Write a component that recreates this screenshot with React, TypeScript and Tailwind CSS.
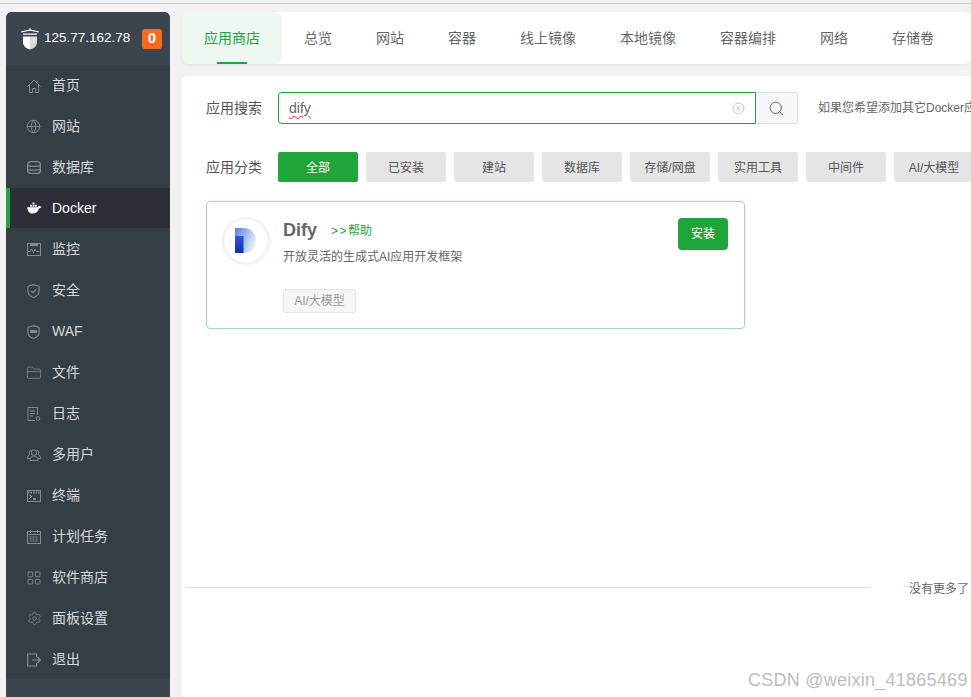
import React from 'react';
import { Globe, FolderClosed, LayoutGrid, Settings, Search, CircleX } from 'lucide-react';

const FONT = "font-['Liberation_Sans','Noto_Sans_CJK_SC',sans-serif]";

const tabs = ['应用商店', '总览', '网站', '容器', '线上镜像', '本地镜像', '容器编排', '网络', '存储卷'];
const categories = ['全部', '已安装', '建站', '数据库', '存储/网盘', '实用工具', '中间件', 'AI/大模型'];

function HomeIcon() {
  return (
    <svg width="14" height="14" viewBox="0 0 14 14" fill="none" stroke="currentColor">
      <path d="M0.500 7.500L7 1l6.500 6.500" />
      <path d="M2.500 6v7.500h3V9.500h3v4h3V6" />
      <path d="M10 1.500v2.500" />
    </svg>
  );
}

function DatabaseIcon() {
  return (
    <svg width="14" height="13" viewBox="0 0 14 13" fill="none" stroke="currentColor" strokeWidth="1.200">
      <rect x="0.600" y="0.600" width="12.800" height="11.800" rx="3" />
      <path d="M0.600 4.500c2 1.200 10.800 1.200 12.800 0M0.600 8.300c2 1.200 10.800 1.200 12.800 0" />
    </svg>
  );
}

function DockerIcon() {
  return (
    <svg width="15" height="12" viewBox="0 0 15 12" fill="#ffffff">
      <path d="M0.300 5.200h10.500c.2-.9.900-1.400 1.500-1.500.1.500.5.800 1.100.900.500.1.900.100 1.300 0-.5 1.200-1.500 1.800-2.800 1.900C11.200 9.800 8.800 11.600 5.600 11.600 2.200 11.600.4 8.900.3 5.200z" />
      <rect x="3" y="2.800" width="2" height="1.800" />
      <rect x="5.500" y="2.800" width="2" height="1.800" />
      <rect x="5.500" y="0.500" width="2" height="1.800" />
      <rect x="8" y="2.800" width="2" height="1.800" />
    </svg>
  );
}

function MonitorIcon() {
  return (
    <svg width="14" height="13" viewBox="0 0 14 13" fill="none" stroke="currentColor">
      <rect x="0.500" y="0.500" width="13" height="12" />
      <rect x="3" y="1" width="8" height="2" fill="currentColor" stroke="none" />
      <path d="M1 8.500h2l1.500-2.500 2 3.500 1.500-3 1.500 2h3" />
    </svg>
  );
}

function ShieldIcon({ waf }: { waf?: boolean }) {
  return (
    <svg width="13" height="14" viewBox="0 0 13 14" fill="none" stroke="currentColor" strokeWidth="1.100">
      <path d="M6.500 0.600l5.600 1.700v5.200c0 2.800-2.600 4.900-5.600 5.900C3.500 12.400.9 10.300.9 7.500V2.300z" />
      {waf ? <rect x="3" y="5" width="7" height="3" fill="currentColor" stroke="none" /> : <path d="M4 6.800l2 1.900 3.200-3.200" />}
    </svg>
  );
}

function LogIcon() {
  return (
    <svg width="14" height="14" viewBox="0 0 14 14" fill="none" stroke="currentColor">
      <path d="M10.500 8V.5h-9.500v13h7" />
      <path d="M3 4h5M3 6.500h5M3 9h3" />
      <circle cx="11" cy="11.500" r="1.800" />
    </svg>
  );
}

function UsersIcon() {
  return (
    <svg width="14" height="12" viewBox="0 0 14 12" fill="none" stroke="currentColor">
      <circle cx="7" cy="3.500" r="2.800" />
      <path d="M3 11.500c0-2.800 1.500-4.500 4-4.500s4 1.700 4 4.500z" />
      <path d="M4.500 1.500C2.800 1.200 1.800 2.500 2.200 4c.1.600.4 1 .8 1.300C1.300 6 .5 7.500.5 9.500H3M9.500 1.500c1.700-.3 2.700 1 2.300 2.500-.1.600-.4 1-.8 1.300 1.700.7 2.500 2.200 2.500 4.200H11" />
    </svg>
  );
}

function TerminalIcon() {
  return (
    <svg width="14" height="12" viewBox="0 0 14 12" fill="none" stroke="currentColor">
      <rect x="0.500" y="0.500" width="13" height="11" />
      <path d="M1 2.500h12" strokeDasharray="1.500 1" strokeWidth="2" />
      <path d="M2.500 5l2 1.700-2 1.700M6 9h3" stroke="#d5d8dc" />
    </svg>
  );
}

function CalendarIcon() {
  return (
    <svg width="14" height="14" viewBox="0 0 14 14" fill="none" stroke="currentColor">
      <rect x="0.500" y="1.500" width="13" height="12" />
      <path d="M3.500 0v3M10.500 0v3M0.500 4.500h13" />
      <path d="M2.500 7h9M2.500 9h9M2.500 11h9" strokeDasharray="2 1" />
    </svg>
  );
}

function ExitIcon() {
  return (
    <svg width="14" height="14" viewBox="0 0 14 14" fill="none" stroke="currentColor" strokeWidth="1.200">
      <path d="M9.500 4V1H.7v12h8.800v-3" />
      <path d="M5 7h8.300M10.500 4l3 3-3 3" />
    </svg>
  );
}

const menu: { label: string; icon: React.ReactNode; active?: boolean }[] = [
  { label: '首页', icon: <HomeIcon /> },
  { label: '网站', icon: <Globe size={15} strokeWidth={1.500} className="-ml-px" /> },
  { label: '数据库', icon: <DatabaseIcon /> },
  { label: 'Docker', icon: <DockerIcon />, active: true },
  { label: '监控', icon: <MonitorIcon /> },
  { label: '安全', icon: <ShieldIcon /> },
  { label: 'WAF', icon: <ShieldIcon waf /> },
  { label: '文件', icon: <FolderClosed size={16} strokeWidth={1.200} className="-ml-px" /> },
  { label: '日志', icon: <LogIcon /> },
  { label: '多用户', icon: <UsersIcon /> },
  { label: '终端', icon: <TerminalIcon /> },
  { label: '计划任务', icon: <CalendarIcon /> },
  { label: '软件商店', icon: <LayoutGrid size={16} strokeWidth={1.300} className="-ml-px" /> },
  { label: '面板设置', icon: <Settings size={15} strokeWidth={1.200} /> },
  { label: '退出', icon: <ExitIcon /> },
];

function Sidebar() {
  return (
    <aside className="flex w-[164px] shrink-0 flex-col overflow-hidden rounded-t-[6px] bg-[#363e45]">
      <div className="flex h-[53px] items-center bg-[#3c444d] pl-[14px] pr-[8px]">
        <svg width="20" height="22" viewBox="0 0 20 22" className="shrink-0">
          <path d="M9.500 0h1v1.500L19 3.500v1l-9-1.700L1 4.500v-1l8.500-2z" fill="#ffffff" />
          <path d="M3 5.500h14v1.200H3z" fill="#ffffff" />
          <path d="M3 8.500h7V21.500C6 20.500 3 18 3 14z" fill="#ffffff" />
          <path d="M10 8.500h7V14c0 4-3 6.500-7 7.500z" fill="#d9dcdf" />
        </svg>
        <span className="ml-[4px] text-[13.500px] text-white">125.77.162.78</span>
        <span className="ml-auto flex h-[20px] w-[20px] items-center justify-center rounded-[3px] bg-[#f96a21] text-[15px] font-bold text-white">0</span>
      </div>
      <nav className="-mb-px flex flex-col">
        {menu.map((item) => (
          <div
            key={item.label}
            className={
              item.active
                ? 'mb-px flex h-[40px] items-center border-l-[4px] border-[#20a53a] bg-[#2c3036] pl-[17px] text-[14px] text-white'
                : 'flex h-[41px] items-center pl-[21px] text-[14px] text-[#d5d8dc]'
            }
          >
            <span className={item.active ? 'flex w-[25px] items-center' : 'flex w-[25px] items-center text-[#858a8f]'}>{item.icon}</span>
            <span>{item.label}</span>
          </div>
        ))}
      </nav>
      <div className="relative flex-1 bg-[#3c444d]" />
    </aside>
  );
}

function TabBar() {
  return (
    <div className="flex h-[52px] shrink-0 rounded-[6px] bg-white shadow-[0_1px_3px_rgba(0,0,0,0.08)]">
      {tabs.map((tab, i) => (
        <div
          key={tab}
          className={
            i === 0
              ? 'relative flex items-center rounded-[6px] bg-[#eff7f1] px-[22px] text-[14px] text-[#20a53a]'
              : 'flex items-center px-[22px] text-[14px] text-[#666666]'
          }
        >
          {tab}
          {i === 0 && <span className="absolute bottom-0 left-[35px] h-[2px] w-[30px] bg-[#20a53a]" />}
        </div>
      ))}
    </div>
  );
}

function DifyLogo() {
  return (
    <svg width="22" height="26" viewBox="0 0 22 26">
      <defs>
        <linearGradient id="difyBody" x1="0" y1="0" x2="1" y2="0.500">
          <stop offset="0" stopColor="#5b7fe0" />
          <stop offset="1" stopColor="#e4ebfa" />
        </linearGradient>
        <linearGradient id="difyStem" x1="0" y1="0" x2="0" y2="1">
          <stop offset="0" stopColor="#3058d8" />
          <stop offset="1" stopColor="#0a2bb8" />
        </linearGradient>
      </defs>
      <path d="M0 0h9c7 0 12 5.500 12 12.500S16 25 9 25h-1V9c0-.8-.5-1-1-1H0z" fill="url(#difyBody)" />
      <path d="M0 8h8.500v17H0z" fill="url(#difyStem)" />
    </svg>
  );
}

function AppCard() {
  return (
    <div className="mt-[19px] flex h-[128px] w-[539px] items-start rounded-[4px] border border-[#9bdca8] p-[16px] shadow-[0_0_4px_rgba(0,0,0,0.06)]">
      <div className="ml-px mt-px flex h-[44px] w-[44px] shrink-0 items-center justify-center rounded-full bg-white shadow-[0_0_4px_rgba(0,0,0,0.18)]">
        <DifyLogo />
      </div>
      <div className="ml-[15px] mt-px flex-1">
        <div className="flex h-[22px] items-center">
          <span className="text-[18px] font-bold text-[#666666]">Dify</span>
          <span className="ml-[14px] mt-[1px] text-[12px] text-[#20a53a]">
            <span className="tracking-[1.500px]">&gt;&gt;</span>帮助
          </span>
        </div>
        <p className="mt-[7px] text-[12px] leading-[18px] text-[#666666]">开放灵活的生成式AI应用开发框架</p>
        <span className="mt-[23px] inline-flex h-[24px] w-[73px] items-center justify-center rounded-[3px] border border-[#e5e5e5] bg-[#f5f5f5] text-[12px] text-[#999999]">AI/大模型</span>
      </div>
      <button className="flex h-[32px] w-[50px] shrink-0 items-center justify-center rounded-[4px] bg-[#20a53a] text-[12px] text-white">安装</button>
    </div>
  );
}

function StorePanel() {
  return (
    <div className="mt-[12px] flex min-h-0 flex-1 flex-col overflow-hidden rounded-t-[6px] bg-white pl-[24px] pt-[16px]">
      <div className="flex h-[32px] items-center">
        <span className="w-[72px] shrink-0 text-[14px] leading-[32px] text-[#555555]">应用搜索</span>
        <div className="flex h-[32px] w-[478px] shrink-0 items-center rounded-l-[4px] border border-[#20a53a] pl-[10px] pr-[10px]">
          <span className="text-[14px] text-[#666666] underline decoration-[#f01c2c] decoration-wavy decoration-1 underline-offset-2">dify</span>
          <CircleX size={13} strokeWidth={1.200} className="ml-auto text-[#a8abb2]" />
        </div>
        <div className="flex h-[32px] w-[42px] shrink-0 items-center justify-center rounded-r-[4px] border border-l-0 border-[#dcdfe6] bg-[#f5f7fa] text-[#606266]">
          <Search size={17} strokeWidth={1.300} />
        </div>
        <span className="ml-[20px] whitespace-nowrap text-[12px] text-[#666666]">如果您希望添加其它Docker应用，请联系我们</span>
      </div>
      <div className="mt-[28px] flex h-[30px] items-center">
        <span className="w-[72px] shrink-0 text-[14px] text-[#555555]">应用分类</span>
        <div className="flex gap-[8px]">
          {categories.map((c, i) => (
            <span
              key={c}
              className={
                i === 0
                  ? 'flex h-[30px] w-[80px] shrink-0 items-center justify-center rounded-[2px] bg-[#20a53a] pt-[2px] text-[12px] text-white'
                  : 'flex h-[30px] w-[80px] shrink-0 items-center justify-center rounded-[2px] bg-[#e5e5e5] pt-[2px] text-[12px] text-[#555555]'
              }
            >
              {c}
            </span>
          ))}
        </div>
      </div>
      <AppCard />
      <div className="-ml-[20px] mt-[249px] flex items-center">
        <div className="h-px w-[684px] shrink-0 bg-[#dcdcdc]" />
        <span className="ml-[39px] translate-y-[2px] whitespace-nowrap text-[12px] text-[#666666]">没有更多了，</span>
      </div>
    </div>
  );
}

export default function App() {
  return (
    <div className={`${FONT} relative flex h-[697px] w-[971px] flex-col overflow-hidden bg-[#f2f2f2]`}>
      <div className="mt-[3px] h-px w-full shrink-0 bg-[#cccccc]" />
      <div className="mt-[8px] flex min-h-0 flex-1 pl-[6px]">
        <Sidebar />
        <main className="ml-[12px] flex min-w-0 flex-1 flex-col">
          <TabBar />
          <StorePanel />
        </main>
      </div>
      <span className="absolute left-[748px] top-[667px] whitespace-nowrap text-[18px] tracking-[0.250px] text-[#bdbdbd]">CSDN @weixin_41865469</span>
    </div>
  );
}
